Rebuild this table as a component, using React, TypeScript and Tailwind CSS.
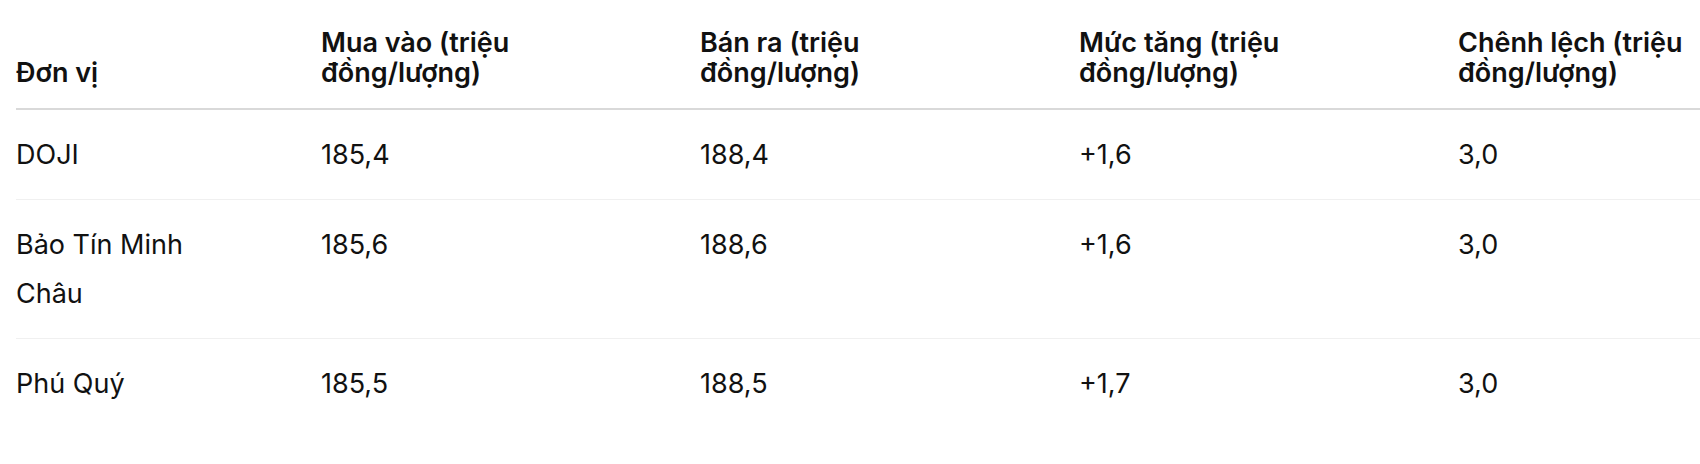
const rows = [
  { unit: "DOJI", buy: "185,4", sell: "188,4", up: "+1,6", spread: "3,0" },
  { unit: "Bảo Tín Minh Châu", buy: "185,6", sell: "188,6", up: "+1,6", spread: "3,0" },
  { unit: "Phú Quý", buy: "185,5", sell: "188,5", up: "+1,7", spread: "3,0" },
];

const headers = [
  "Đơn vị",
  "Mua vào (triệu đồng/lượng)",
  "Bán ra (triệu đồng/lượng)",
  "Mức tăng (triệu đồng/lượng)",
  "Chênh lệch (triệu đồng/lượng)",
];

export default function App() {
  return (
    <div
      className="w-[1700px] h-[464px] overflow-hidden bg-white pt-[8px] pl-[16px] text-[#111]"
      style={{ fontFamily: "Inter, 'Noto Sans', sans-serif" }}
    >
      <table className="table-fixed border-collapse w-[1821px]">
        <colgroup>
          <col className="w-[305px]" />
          <col className="w-[379px]" />
          <col className="w-[379px]" />
          <col className="w-[379px]" />
          <col className="w-[379px]" />
        </colgroup>
        <thead>
          <tr className="border-b-2 border-[#d9d9d9]">
            {headers.map((h) => (
              <th
                key={h}
                className="text-left align-bottom font-semibold text-[27px] leading-[30px] pt-[20px] pb-[20px] pr-[80px]"
              >
                {h}
              </th>
            ))}
          </tr>
        </thead>
        <tbody>
          {rows.map((r, i) => (
            <tr
              key={r.unit}
              className={i < rows.length - 1 ? "border-b border-[#f0f0f0]" : ""}
            >
              {[r.unit, r.buy, r.sell, r.up, r.spread].map((v, j) => (
                <td
                  key={j}
                  className="align-top text-[27px] leading-[49px] py-[20px] pr-[80px]"
                >
                  {v}
                </td>
              ))}
            </tr>
          ))}
        </tbody>
      </table>
    </div>
  );
}
